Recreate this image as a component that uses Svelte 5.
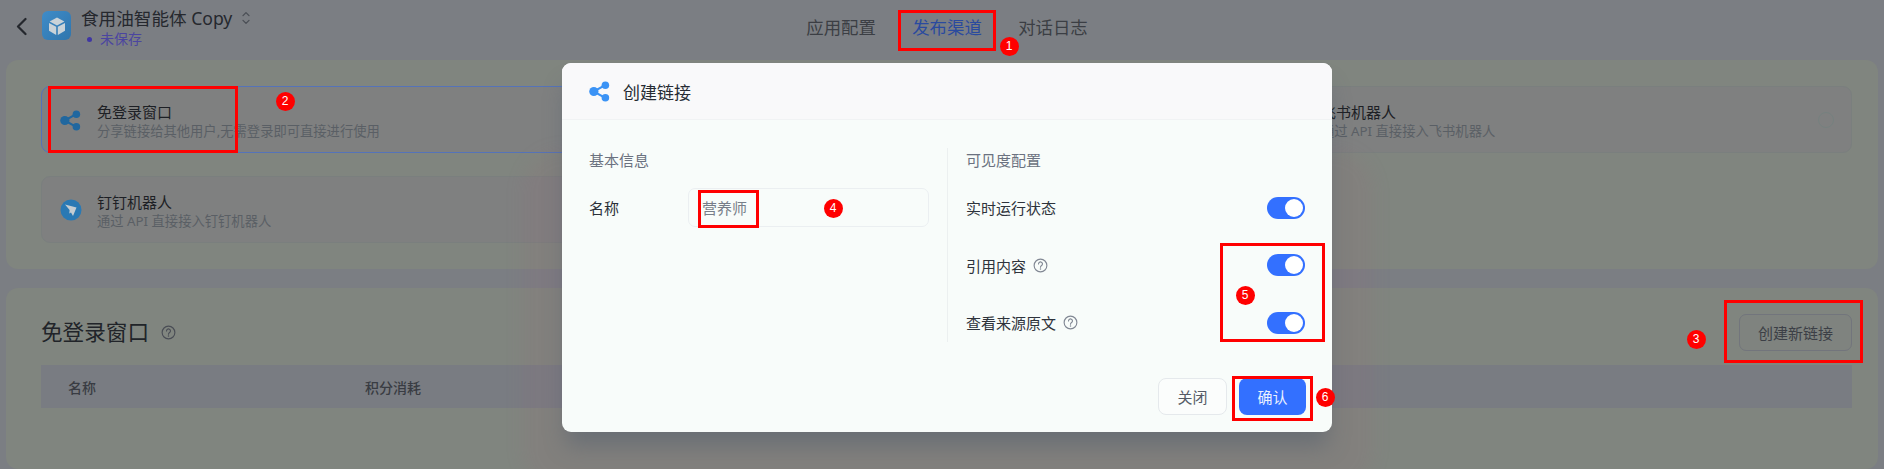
<script>
  const boxes = [
    { x: 898, y: 10, w: 98, h: 41 },
    { x: 48, y: 86, w: 190, h: 67 },
    { x: 1724, y: 300, w: 139, h: 63 },
    { x: 698, y: 190, w: 61, h: 38 },
    { x: 1220, y: 243, w: 105, h: 99 },
    { x: 1232, y: 376, w: 81, h: 45 }
  ];
  const badges = [
    { n: 1, x: 1009, y: 46 },
    { n: 2, x: 285, y: 101 },
    { n: 3, x: 1696, y: 339 },
    { n: 4, x: 833, y: 208 },
    { n: 5, x: 1245, y: 295 },
    { n: 6, x: 1325, y: 397 }
  ];
  const toggles = [
    { label: '实时运行状态', help: false },
    { label: '引用内容', help: true },
    { label: '查看来源原文', help: true }
  ];
</script>

{#snippet help(size)}
  <svg class="help" width={size} height={size} viewBox="0 0 16 16" fill="none" stroke="currentColor" stroke-width="1.2">
    <circle cx="8" cy="8" r="6.8" />
    <path d="M5.9 6.3a2.1 2.1 0 1 1 3.3 1.7c-.7.5-1.2.9-1.2 1.8" stroke-linecap="round" />
    <circle cx="8" cy="11.6" r=".8" fill="currentColor" stroke="none" />
  </svg>
{/snippet}

{#snippet share(size, color)}
  <svg width={size} height={size} viewBox="0 0 20 20" fill={color}>
    <path d="M4.5 10 15 4.2M4.5 10 15 15.8" stroke={color} stroke-width="2" />
    <circle cx="4.6" cy="10" r="4.4" />
    <circle cx="15.6" cy="4" r="3.6" />
    <circle cx="15.6" cy="16" r="3.6" />
  </svg>
{/snippet}

<div class="stage">
  <div class="page">
    <header class="topbar">
      <div class="app">
        <svg class="back" width="12" height="19" viewBox="0 0 12 19" fill="none" stroke="#24272d" stroke-width="2.2" stroke-linecap="round" stroke-linejoin="round">
          <path d="M10.5 2 3 9.5l7.5 7.5" />
        </svg>
        <div class="logo">
          <svg width="20" height="20" viewBox="0 0 20 20" fill="#c9d2d8">
            <path d="M10 1.5 17.4 5.6 10 9.4 2.6 5.6Z" />
            <path d="M2 7l7.2 3.8V19L2 14.8Z" />
            <path d="M18 7l-7.2 3.8V19l7.2-4.2Z" />
          </svg>
        </div>
        <div class="app-text">
          <div class="app-name">
            食用油智能体 Copy
            <svg width="8" height="14" viewBox="0 0 8 14" fill="none" stroke="#4a4e55" stroke-width="1.3" stroke-linecap="round" stroke-linejoin="round">
              <path d="M1 4.6 4 1.6l3 3M1 9.4l3 3 3-3" />
            </svg>
          </div>
          <div class="unsaved"><i></i>未保存</div>
        </div>
      </div>
      <nav class="tabs">
        <span>应用配置</span>
        <span class="active">发布渠道</span>
        <span>对话日志</span>
      </nav>
    </header>

    <section class="panel channels">
      <div class="channel selected">
        <span class="ico share-ico">{@render share(21, '#20679f')}</span>
        <div class="ctext">
          <div class="ctitle">免登录窗口</div>
          <div class="csub">分享链接给其他用户,无需登录即可直接进行使用</div>
        </div>
      </div>
      <div class="channel third">
        <span class="ico"></span>
        <div class="ctext">
          <div class="ctitle">飞书机器人</div>
          <div class="csub">通过 API 直接接入飞书机器人</div>
        </div>
        <span class="radio"></span>
      </div>
      <div class="channel">
        <span class="ico">
          <svg width="22" height="22" viewBox="0 0 22 22">
            <circle cx="11" cy="11" r="10.5" fill="#2a79b4" />
            <path d="M5 5.5 16.5 8.5 13 17 11 13.5 9.3 14.6 9.6 11Z" fill="#c4cdd2" />
          </svg>
        </span>
        <div class="ctext">
          <div class="ctitle">钉钉机器人</div>
          <div class="csub">通过 API 直接接入钉钉机器人</div>
        </div>
      </div>
    </section>

    <section class="panel links">
      <div class="links-head">
        <h2>免登录窗口 {@render help(15)}</h2>
        <button class="outline">创建新链接</button>
      </div>
      <div class="thead">
        <span>名称</span>
        <span>积分消耗</span>
      </div>
    </section>
  </div>

  <div class="glow"></div>

  <div class="modal">
    <div class="mhead">
      {@render share(21, '#3b93f5')}
      <span>创建链接</span>
    </div>
    <div class="mbody">
      <div class="mleft">
        <div class="mlabel">基本信息</div>
        <div class="field">
          <label for="nm">名称</label>
          <input id="nm" value="营养师" />
        </div>
      </div>
      <div class="mright">
        <div class="mlabel">可见度配置</div>
        {#each toggles as t}
          <div class="row">
            <span class="rlabel">{t.label}{#if t.help}{@render help(15)}{/if}</span>
            <span class="switch"><i></i></span>
          </div>
        {/each}
      </div>
    </div>
    <div class="mfoot">
      <button class="close">关闭</button>
      <button class="ok">确认</button>
    </div>
  </div>

  {#each boxes as b}
    <div class="redbox" style="left:{b.x}px;top:{b.y}px;width:{b.w}px;height:{b.h}px"></div>
  {/each}
  {#each badges as b}
    <div class="badge" style="left:{b.x}px;top:{b.y}px">{b.n}</div>
  {/each}
</div>

<style>
  :global(body) {
    margin: 0;
    background: #7b7e83;
    font-family: "Noto Sans", "Noto Sans CJK SC", sans-serif;
  }
  .stage {
    position: relative;
    width: 1884px;
    height: 469px;
    overflow: hidden;
  }
  .page {
    height: 469px;
    display: flex;
    flex-direction: column;
    box-sizing: border-box;
    padding: 0 6px;
    background: #7b7e83;
  }
  .topbar {
    height: 60px;
    flex: none;
    display: grid;
    grid-template-columns: 1fr auto 1fr;
    align-items: start;
  }
  .app {
    display: flex;
    align-items: flex-start;
    padding-left: 9px;
  }
  .back {
    margin-top: 16.5px;
    margin-right: 15px;
  }
  .logo {
    width: 29px;
    height: 29px;
    margin-top: 11px;
    margin-right: 10px;
    border-radius: 6px;
    background: linear-gradient(135deg, #3f8cc8, #2f75ad);
    display: flex;
    align-items: center;
    justify-content: center;
  }
  .app-text {
    padding-top: 6px;
  }
  .app-name {
    display: flex;
    align-items: center;
    gap: 10px;
    font-size: 17.6px;
    line-height: 24px;
    color: #25282e;
    white-space: nowrap;
  }
  .unsaved {
    display: flex;
    align-items: center;
    font-size: 14px;
    line-height: 16px;
    margin-top: 1px;
    padding-left: 6px;
    color: #4b45a0;
  }
  .unsaved i {
    width: 5px;
    height: 5px;
    border-radius: 50%;
    background: #3f36a4;
    margin-right: 8px;
  }
  .tabs {
    display: flex;
    gap: 36.4px;
    padding: 15px 0 0;
    margin-left: 10px;
    font-size: 17.4px;
    line-height: 24px;
    color: #3b3e44;
  }
  .tabs .active {
    color: #2a4a9f;
  }
  .panel {
    background: #80857f;
    border-radius: 12px;
    box-sizing: border-box;
    flex: none;
  }
  .channels {
    height: 209px;
    padding: 26px 26px 0 35px;
    display: grid;
    grid-template-columns: repeat(3, 1fr);
    grid-auto-rows: 67px;
    column-gap: 25px;
    row-gap: 23px;
    align-content: start;
  }
  .channel {
    border: 1px solid #7a7f7e;
    border-radius: 9px;
    background: #7f8080;
    display: flex;
    align-items: center;
    padding: 0 17px 0 18px;
    box-sizing: border-box;
    grid-column: 1;
  }
  .channel.selected {
    border-color: #5573b8;
    grid-row: 1;
  }
  .channel.third {
    grid-column: 3;
    grid-row: 1;
  }
  .ico {
    width: 37px;
    flex: none;
    display: flex;
    align-items: center;
  }
  .share-ico {
    padding-top: 2px;
  }
  .ctext {
    flex: 1;
    min-width: 0;
    padding-top: 4px;
  }
  .ctitle {
    font-size: 15px;
    line-height: 19px;
    color: #1d2025;
  }
  .csub {
    font-size: 13.3px;
    line-height: 19px;
    color: #5a5f65;
    white-space: nowrap;
  }
  .radio {
    width: 16px;
    height: 16px;
    box-sizing: border-box;
    border: 1.5px solid #76807f;
    border-radius: 50%;
  }
  .links {
    flex: 1;
    margin-top: 19px;
    padding: 26px 26px 0 35px;
  }
  .links-head {
    display: flex;
    justify-content: space-between;
    align-items: flex-start;
    height: 51px;
  }
  h2 {
    margin: 4px 0 0;
    font-size: 21.6px;
    line-height: 28px;
    font-weight: 400;
    color: #212429;
    display: flex;
    align-items: center;
    gap: 12px;
  }
  h2 :global(.help) {
    color: #494d55;
  }
  .outline {
    width: 113px;
    height: 37px;
    border: 1px solid #72757c;
    border-radius: 7px;
    background: #7f837f;
    color: #3c3f46;
    font: inherit;
    font-size: 15px;
    padding: 0;
  }
  .thead {
    height: 43px;
    background: #797c82;
    display: flex;
    align-items: center;
    padding-left: 27px;
    font-size: 14px;
    font-weight: 500;
    color: #393c43;
  }
  .thead span:first-child {
    width: 297px;
  }
  .glow {
    position: absolute;
    left: 522px;
    top: 150px;
    width: 852px;
    height: 340px;
    border-radius: 40px;
    background: rgba(150, 100, 115, 0.13);
    filter: blur(8px);
  }
  .modal {
    position: absolute;
    left: 562px;
    top: 63px;
    width: 770px;
    height: 369px;
    border-radius: 9px;
    background: #f8fcfa;
    overflow: hidden;
    display: flex;
    flex-direction: column;
    box-shadow: 0 18px 22px -4px rgba(70, 85, 105, 0.4);
  }
  .mhead {
    height: 57px;
    flex: none;
    box-sizing: border-box;
    padding: 0 27px;
    display: flex;
    align-items: center;
    gap: 13px;
    background: #f9f9fa;
    border-bottom: 1px solid #f1f3f4;
    font-size: 17px;
    color: #262b33;
  }
  .mbody {
    flex: 1;
    display: flex;
    padding: 28px 27px 0;
  }
  .mleft {
    width: 358px;
    flex: none;
    box-sizing: border-box;
    padding-right: 18px;
  }
  .mlabel {
    font-size: 15px;
    line-height: 24px;
    color: #6b7280;
  }
  .field {
    display: flex;
    align-items: center;
    margin-top: 16px;
    font-size: 15px;
  }
  .field label {
    width: 99px;
    color: #2b3038;
  }
  .field input {
    width: 241px;
    height: 39px;
    box-sizing: border-box;
    border: 1px solid #ebeff1;
    border-radius: 7px;
    background: #f8fcfa;
    padding: 0 13px;
    font: inherit;
    font-size: 15px;
    color: #777e89;
    outline: none;
  }
  .mright {
    flex: 1;
    border-left: 1px solid #ecf0f0;
    padding: 0 0 0 18px;
    height: 194px;
  }
  .row {
    height: 57.5px;
    display: flex;
    align-items: center;
    justify-content: space-between;
  }
  .mright .mlabel {
    margin-bottom: 7px;
  }
  .rlabel {
    display: flex;
    align-items: center;
    gap: 7px;
    font-size: 15px;
    color: #2e333b;
  }
  .rlabel :global(.help) {
    color: #808793;
  }
  .switch {
    width: 38px;
    height: 22px;
    border-radius: 11px;
    background: #3370ff;
    position: relative;
  }
  .switch i {
    position: absolute;
    right: 2px;
    top: 2px;
    width: 18px;
    height: 18px;
    border-radius: 50%;
    background: #fff;
  }
  .mfoot {
    flex: none;
    display: flex;
    justify-content: flex-end;
    gap: 12px;
    padding: 0 26px 17px;
  }
  .mfoot button {
    height: 37px;
    border-radius: 8px;
    font: inherit;
    font-size: 15px;
    padding: 0;
  }
  .close {
    width: 69px;
    background: #fbfdfc;
    border: 1.5px solid #e5e9ec;
    color: #555b66;
  }
  .ok {
    width: 67px;
    border: none;
    background: #3370ff;
    color: #eaf0ff;
  }
  .redbox {
    position: absolute;
    box-sizing: border-box;
    border: 3px solid #ff0000;
  }
  .badge {
    position: absolute;
    width: 19px;
    height: 19px;
    margin: -9.5px 0 0 -9.5px;
    border-radius: 50%;
    background: #ff0000;
    color: #fff;
    font-family: "Liberation Sans", sans-serif;
    font-size: 12px;
    line-height: 19px;
    text-align: center;
  }
</style>
